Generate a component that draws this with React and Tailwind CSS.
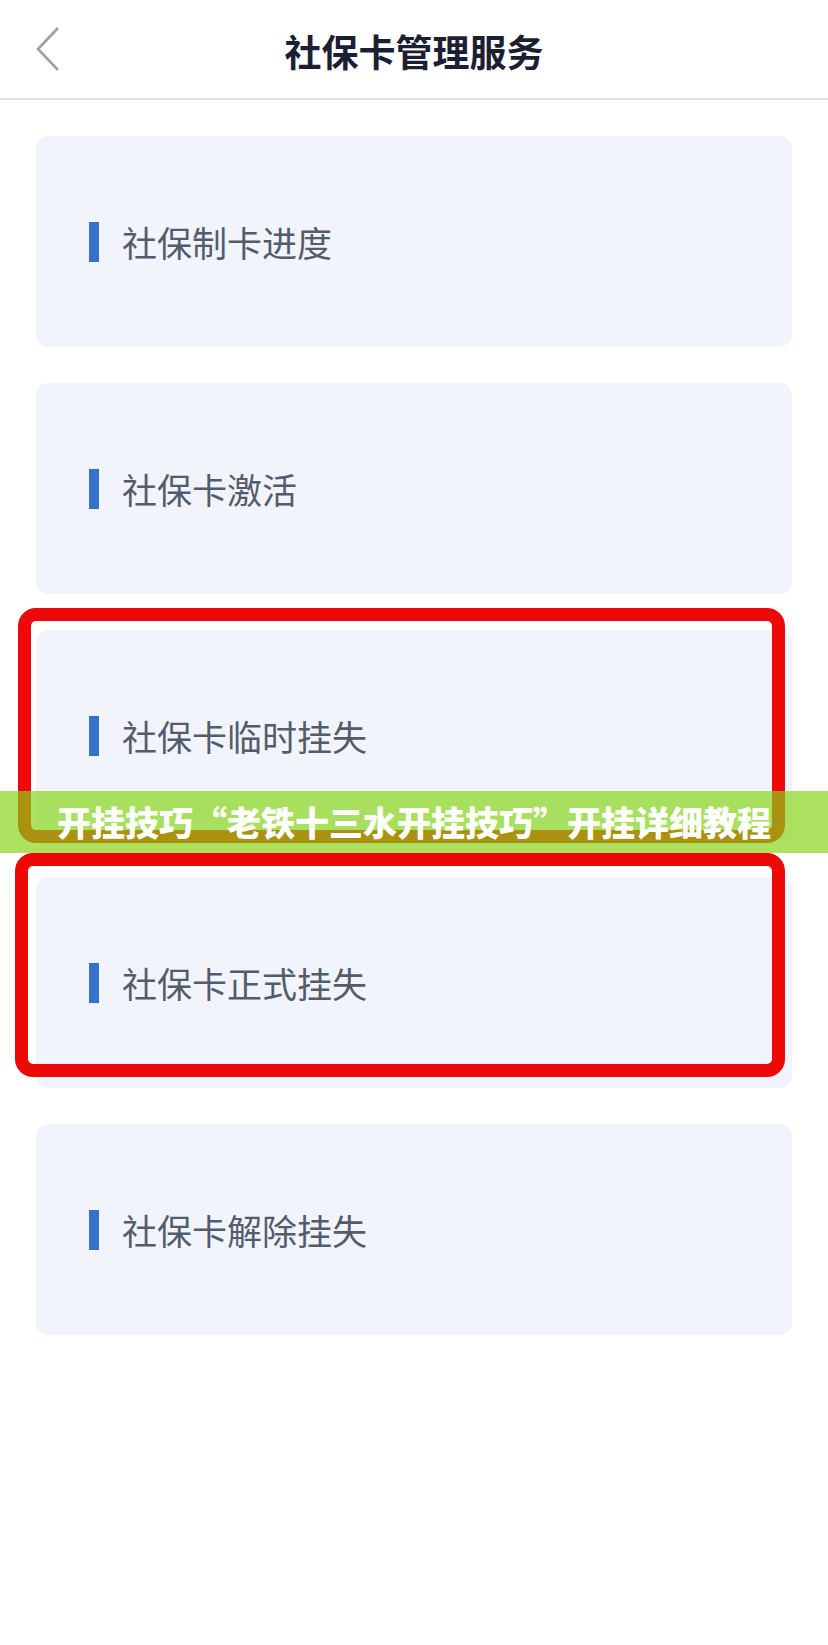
import React from "react";

const items = ["社保制卡进度", "社保卡激活", "社保卡临时挂失", "社保卡正式挂失", "社保卡解除挂失"];

export default function App() {
  return (
    <div
      className="relative w-[828px] min-h-[1645px] bg-white overflow-hidden"
      style={{ fontFamily: '"Noto Sans CJK SC", "Noto Sans", sans-serif' }}
    >
      <header className="grid grid-cols-[1fr_auto_1fr] items-center h-[100px] border-b-2 border-[#e4e4e4]">
        <div className="pl-[35px] flex items-center">
          <svg width="26" height="46" viewBox="0 0 26 46" fill="none">
            <polyline points="23,2 3,23 23,44" stroke="#a0a0a0" strokeWidth="2.6" strokeLinejoin="miter" />
          </svg>
        </div>
        <h1 className="text-[37px] font-semibold text-[#1c1f33] leading-none pt-[4px]">社保卡管理服务</h1>
        <div />
      </header>

      <div className="px-[36px] pt-[36px] flex flex-col gap-[36px]">
        {items.map((t) => (
          <div key={t} className="h-[211px] rounded-[12px] bg-[#f1f4fb] flex items-center pl-[53px]">
            <div className="w-[10px] h-[40px] bg-[#3572c8]" />
            <span className="ml-[23px] text-[35px] leading-none text-[#535c6d]">{t}</span>
          </div>
        ))}
      </div>

      <div className="absolute left-[18px] top-[608px] w-[767px] h-[235px] border-[13px] border-[#ee0909] rounded-[18px]" />
      <div className="absolute left-[15px] top-[853px] w-[770px] h-[224px] border-[13px] border-[#ee0909] rounded-[18px]" />

      <div className="absolute left-0 top-[791px] w-[828px] h-[62px] bg-[rgba(134,212,20,0.68)] flex items-center justify-center">
        <span className="text-[34px] font-black text-white leading-none">
          开挂技巧“老铁十三水开挂技巧”开挂详细教程
        </span>
      </div>
    </div>
  );
}
